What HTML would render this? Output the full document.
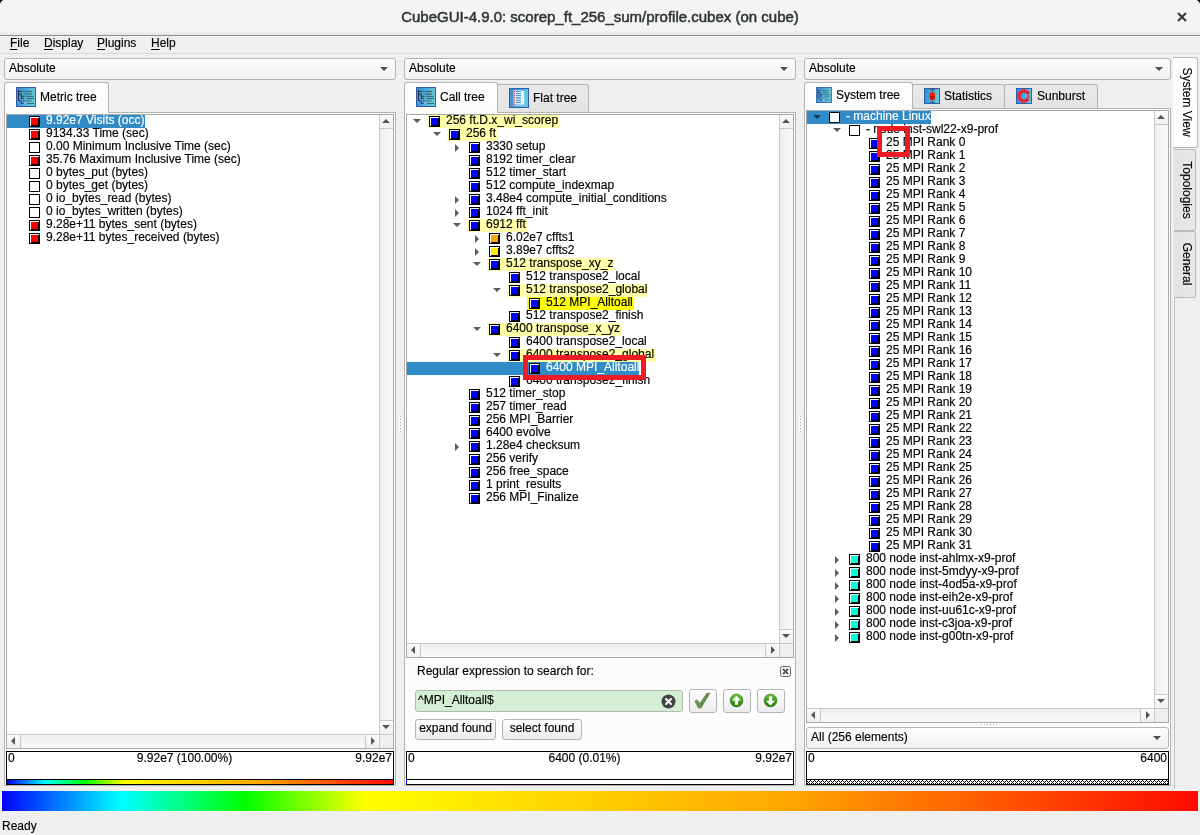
<!DOCTYPE html>
<html><head><meta charset="utf-8"><title>CubeGUI-4.9.0</title>
<style>
html,body{margin:0;padding:0}
body{width:1200px;height:835px;position:relative;overflow:hidden;background:#000;font:12px/13px "Liberation Sans",sans-serif;color:#000;-webkit-text-stroke:0.15px}
.a,.a *{position:absolute;box-sizing:border-box}
#win{will-change:transform;left:0;top:0;width:1200px;height:835px;background:#efefef;border-radius:5px 5px 0 0;overflow:hidden}
#tb{left:0;top:0;width:1200px;height:35px;background:linear-gradient(#f4f4f4 0,#f4f4f4 86%,#e7e7e6 100%)}
#tbl{left:0;top:35px;width:1200px;height:1px;background:#8e8e89}
#tbl2{left:0;top:36px;width:1200px;height:1px;background:#dcdcdc}
#title{left:0;top:8px;width:1200px;text-align:center;font:15px/18px "Liberation Sans",sans-serif;color:#2e3436;-webkit-text-stroke:0.5px #2e3436;white-space:nowrap}
.mi{top:36px;height:14px;line-height:14px;white-space:nowrap}
.mi u{position:static;text-decoration:underline;text-underline-offset:2px}
#msep{left:0;top:53px;width:1200px;height:1px;background:#dadada}
.combo{height:22px;border:1px solid #b4b4b4;border-radius:3px;background:linear-gradient(#fdfdfd,#f1f1f1);}
.combo span{left:4px;top:2px;line-height:14px;white-space:nowrap}
.combo i{right:7px;top:8px;width:0;height:0;border-left:4px solid transparent;border-right:4px solid transparent;border-top:4px solid #4f4f4f}
.tab{border:1px solid #b4b4b4;border-bottom:none;border-radius:3px 3px 0 0;background:linear-gradient(#fefefe,#fcfcfc)}
.tab.off{background:linear-gradient(#e9e9e9,#e3e3e3)}
.tab span{white-space:nowrap;line-height:14px}
.pane{border:1px solid #b4b4b4;background:#fcfcfc}
.tree{border:1px solid #a9a9a9;background:#fff;overflow:hidden}
.row{left:0;height:13px;white-space:nowrap}
.row .t{top:0;height:13px;line-height:11px;padding:0 1px 0 0;white-space:nowrap}
.ic{width:11px;height:11px;top:1px;background-color:#000;background-repeat:no-repeat}
.ad{width:0;height:0;top:4px;border-left:4px solid transparent;border-right:4px solid transparent;border-top:4px solid #5c5c5c}
.ar{width:0;height:0;top:3px;border-top:4px solid transparent;border-bottom:4px solid transparent;border-left:4px solid #5c5c5c}
.hl{background:#ffffaa}
.hl2{background:#ffff00}
.sel{background:#308cc6;color:#fff}
.row .t.sel{padding-right:0}
.sb{background:#f4f4f4}
.vb{border:1px solid #000;background:#fff}
.vb span{top:0px;line-height:13px;white-space:nowrap}
.btn{border:1px solid #b4b4b4;border-radius:3px;background:linear-gradient(#fdfdfd,#ececec)}
.btn span{white-space:nowrap;line-height:14px}
</style></head>
<body>
<div id="win" class="a">
<div id="tb"></div><div id="tbl"></div>
<div id="title">CubeGUI-4.9.0: scorep_ft_256_sum/profile.cubex (on cube)</div>
<svg style="left:1176px;top:11px" width="12" height="12" viewBox="0 0 12 12"><path d="M2 2l8 8M10 2l-8 8" stroke="#2e3436" stroke-width="2" fill="none"/></svg>
<div class="mi" style="left:10px"><u>F</u>ile</div>
<div class="mi" style="left:44px"><u>D</u>isplay</div>
<div class="mi" style="left:97px"><u>P</u>lugins</div>
<div class="mi" style="left:151px"><u>H</u>elp</div>
<div id="msep"></div>
<div class="combo" style="left:4px;top:58px;width:392px"><span>Absolute</span><i></i></div>
<div class="pane" style="left:4px;top:112px;width:392px;height:674px"></div>
<div class="tab" style="left:4px;top:82px;width:105px;height:31px"><svg style="left:11px;top:4px" width="20" height="20" viewBox="0 0 20 20"><defs><linearGradient id="g1" x1="0" y1="0" x2="1" y2="0.25"><stop offset="0" stop-color="#3c86cc"/><stop offset="0.5" stop-color="#48a6d8"/><stop offset="1" stop-color="#62cbd9"/></linearGradient></defs><rect x="0.5" y="0.5" width="19" height="19" fill="url(#g1)" stroke="#2f5bb2"/><path d="M2.5 2.8v10.8h1.8l1.1 1.3v1.5h2.3M2.5 4.5h3.2M2.5 7h2.9v4.5h2.3M5.4 9.4h2.3" fill="none" stroke="#2e3338" stroke-width="1" opacity="1"/><path d="M8.9 4.5h7.1M11 9.4h7M11 11.5h7M11 16.4h7" fill="none" stroke="#46525e" stroke-width="0.9" opacity="1"/><path d="M8.9 13.6h7" stroke="#557080" stroke-width="0.9" opacity="1"/><path d="M8.9 7h7" stroke="#527488" stroke-width="1.7" opacity="1"/><rect x="6.8" y="3.9" width="1.3" height="1.2" fill="#3b55e0"/><rect x="6.8" y="6.1" width="1.3" height="1.8" fill="#30e050"/><rect x="8.8" y="8.8" width="1.3" height="1.2" fill="#4060e0"/><rect x="8.7" y="10.7" width="1.5" height="1.5" fill="#20f030"/><rect x="6.9" y="12.9" width="1.1" height="1.5" fill="#d03050"/><rect x="8.8" y="15.4" width="1.3" height="1.7" fill="#e8d040"/></svg><span style="left:35px;top:7px">Metric tree</span></div>
<div class="tree" style="left:6px;top:114px;width:388px;height:635px"><div style="left:0;top:0;width:386px;height:633px">
<div class="row" style="top:0px;width:100%"><div class="sel" style="left:0px;top:0;width:39px;height:13px"></div><div class="ic" style="left:22px;background-image:linear-gradient(#ff0000,#ff0000),linear-gradient(#000,#000),linear-gradient(#fff,#fff);background-position:2px 2px,2px 2px,1px 1px;background-size:7px 7px,8px 8px,9px 9px"></div><span class="t sel" style="left:39px">9.92e7 Visits (occ)</span></div>
<div class="row" style="top:13px;width:100%"><div class="ic" style="left:22px;background-image:linear-gradient(#ff0000,#ff0000),linear-gradient(#000,#000),linear-gradient(#fff,#fff);background-position:2px 2px,2px 2px,1px 1px;background-size:7px 7px,8px 8px,9px 9px"></div><span class="t " style="left:39px">9134.33 Time (sec)</span></div>
<div class="row" style="top:26px;width:100%"><div class="ic" style="left:22px;background-image:linear-gradient(#fff,#fff);background-position:1px 1px;background-size:9px 9px"></div><span class="t " style="left:39px">0.00 Minimum Inclusive Time (sec)</span></div>
<div class="row" style="top:39px;width:100%"><div class="ic" style="left:22px;background-image:linear-gradient(#ff0000,#ff0000),linear-gradient(#000,#000),linear-gradient(#fff,#fff);background-position:2px 2px,2px 2px,1px 1px;background-size:7px 7px,8px 8px,9px 9px"></div><span class="t " style="left:39px">35.76 Maximum Inclusive Time (sec)</span></div>
<div class="row" style="top:52px;width:100%"><div class="ic" style="left:22px;background-image:linear-gradient(#fff,#fff);background-position:1px 1px;background-size:9px 9px"></div><span class="t " style="left:39px">0 bytes_put (bytes)</span></div>
<div class="row" style="top:65px;width:100%"><div class="ic" style="left:22px;background-image:linear-gradient(#fff,#fff);background-position:1px 1px;background-size:9px 9px"></div><span class="t " style="left:39px">0 bytes_get (bytes)</span></div>
<div class="row" style="top:78px;width:100%"><div class="ic" style="left:22px;background-image:linear-gradient(#fff,#fff);background-position:1px 1px;background-size:9px 9px"></div><span class="t " style="left:39px">0 io_bytes_read (bytes)</span></div>
<div class="row" style="top:91px;width:100%"><div class="ic" style="left:22px;background-image:linear-gradient(#fff,#fff);background-position:1px 1px;background-size:9px 9px"></div><span class="t " style="left:39px">0 io_bytes_written (bytes)</span></div>
<div class="row" style="top:104px;width:100%"><div class="ic" style="left:22px;background-image:linear-gradient(#ff0000,#ff0000),linear-gradient(#000,#000),linear-gradient(#fff,#fff);background-position:2px 2px,2px 2px,1px 1px;background-size:7px 7px,8px 8px,9px 9px"></div><span class="t " style="left:39px">9.28e+11 bytes_sent (bytes)</span></div>
<div class="row" style="top:117px;width:100%"><div class="ic" style="left:22px;background-image:linear-gradient(#ff0000,#ff0000),linear-gradient(#000,#000),linear-gradient(#fff,#fff);background-position:2px 2px,2px 2px,1px 1px;background-size:7px 7px,8px 8px,9px 9px"></div><span class="t " style="left:39px">9.28e+11 bytes_received (bytes)</span></div>
<div class="sb" style="left:372px;top:0px;width:14px;height:619px;border-left:1px solid #c8c8c8;background:linear-gradient(90deg,#eeeeee,#f9f9f9)"><div style="left:0;top:0;width:13px;height:14px;border-bottom:1px solid #c8c8c8;background:linear-gradient(#fcfcfc,#f0f0f0)"><div style="left:2px;top:4px;width:0;height:0;border-left:4px solid transparent;border-right:4px solid transparent;border-bottom:4px solid #555"></div></div><div style="left:0;bottom:0;width:13px;height:14px;border-top:1px solid #c8c8c8;background:linear-gradient(#fcfcfc,#f0f0f0)"><div style="left:2px;top:4px;width:0;height:0;border-left:4px solid transparent;border-right:4px solid transparent;border-top:4px solid #555"></div></div></div>
<div style="left:372px;top:619px;width:14px;height:14px;border-top:1px solid #c8c8c8;border-left:1px solid #c8c8c8;background:#efefef"></div><div class="sb" style="left:0px;top:619px;width:372px;height:14px;border-top:1px solid #c8c8c8;background:linear-gradient(#eeeeee,#f9f9f9)"><div style="left:0;top:0;width:14px;height:13px;border-right:1px solid #c8c8c8;background:linear-gradient(#fcfcfc,#f0f0f0)"><div style="left:4px;top:2px;width:0;height:0;border-top:4px solid transparent;border-bottom:4px solid transparent;border-right:4px solid #555"></div></div><div style="right:0;top:0;width:14px;height:13px;border-left:1px solid #c8c8c8;background:linear-gradient(#fcfcfc,#f0f0f0)"><div style="left:5px;top:2px;width:0;height:0;border-top:4px solid transparent;border-bottom:4px solid transparent;border-left:4px solid #555"></div></div></div>
</div></div>
<div class="vb" style="left:6px;top:751px;width:388px;height:34px"><span style="left:1px">0</span><span style="left:0;width:355px;text-align:center">9.92e7 (100.00%)</span><span style="right:1px">9.92e7</span><div style="left:0;top:27px;width:386px;height:1px;background:#000"></div><div style="left:0;top:28px;width:386px;height:4px;background:linear-gradient(90deg,#0000ff 0%,#00ffff 10%,#00ff00 20.3%,#ffff00 30.4%,#ffa500 66%,#ff0a00 100%)"></div></div>
<div class="combo" style="left:404px;top:58px;width:392px"><span>Absolute</span><i></i></div>
<div class="pane" style="left:404px;top:112px;width:392px;height:674px"></div>
<div class="tab off" style="left:497px;top:84px;width:92px;height:28px"><svg style="left:11px;top:3px" width="20" height="20" viewBox="0 0 20 20"><defs><linearGradient id="gf" x1="0" y1="0" x2="1" y2="0.25"><stop offset="0" stop-color="#3c86cc"/><stop offset="0.5" stop-color="#48a6d8"/><stop offset="1" stop-color="#62cbd9"/></linearGradient><linearGradient id="gp" x1="0" y1="0" x2="1" y2="0"><stop offset="0" stop-color="#c4e0f6"/><stop offset="1" stop-color="#eef7fc"/></linearGradient></defs><rect x="0.5" y="0.5" width="19" height="19" fill="url(#gf)" stroke="#2f5bb2"/><path d="M4.6 2.2h7.6l0.6 0.8h2.4v13.4h-2.2l-0.6 1h-7.8z" fill="url(#gp)"/><path d="M7 3.4h5M7 5.5h5M7 7.5h5M7 12.4h5M7 14.4h5" stroke="#3d8fd8" stroke-width="0.9"/><path d="M7 9.9h5" stroke="#6aaee6" stroke-width="1.9"/><path d="M7 16.4h5" stroke="#8cc2ec" stroke-width="0.9"/><g fill="#ee4048"><rect x="4.9" y="2.9" width="1.1" height="1.1"/><rect x="4.9" y="5" width="1.1" height="1.1"/><rect x="4.9" y="7" width="1.1" height="1.1"/><rect x="4.9" y="9" width="1.1" height="1.8" opacity="0.7"/><rect x="4.9" y="11.9" width="1.1" height="1.1"/><rect x="4.9" y="13.9" width="1.1" height="1.1"/><rect x="4.9" y="15.9" width="1.1" height="1.1"/></g></svg><span style="left:35px;top:6px">Flat tree</span></div>
<div class="tab" style="left:404px;top:82px;width:94px;height:31px"><svg style="left:11px;top:4px" width="20" height="20" viewBox="0 0 20 20"><defs><linearGradient id="g2" x1="0" y1="0" x2="1" y2="0.25"><stop offset="0" stop-color="#3c86cc"/><stop offset="0.5" stop-color="#48a6d8"/><stop offset="1" stop-color="#62cbd9"/></linearGradient></defs><rect x="0.5" y="0.5" width="19" height="19" fill="url(#g2)" stroke="#2f5bb2"/><path d="M2.5 2.8v10.8h1.8l1.1 1.3v1.5h2.3M2.5 4.5h3.2M2.5 7h2.9v4.5h2.3M5.4 9.4h2.3" fill="none" stroke="#2e3338" stroke-width="1" opacity="1"/><path d="M8.9 4.5h7.1M11 9.4h7M11 11.5h7M11 16.4h7" fill="none" stroke="#46525e" stroke-width="0.9" opacity="1"/><path d="M8.9 13.6h7" stroke="#557080" stroke-width="0.9" opacity="1"/><path d="M8.9 7h7" stroke="#527488" stroke-width="1.7" opacity="1"/><rect x="6.8" y="3.9" width="1.3" height="1.2" fill="#3b55e0"/><rect x="6.8" y="6.1" width="1.3" height="1.8" fill="#30e050"/><rect x="8.8" y="8.8" width="1.3" height="1.2" fill="#4060e0"/><rect x="8.7" y="10.7" width="1.5" height="1.5" fill="#20f030"/><rect x="6.9" y="12.9" width="1.1" height="1.5" fill="#d03050"/><rect x="8.8" y="15.4" width="1.3" height="1.7" fill="#e8d040"/></svg><span style="left:35px;top:7px">Call tree</span></div>
<div class="tree" style="left:406px;top:114px;width:388px;height:544px"><div style="left:0;top:0;width:386px;height:542px">
<div class="row" style="top:0px;width:100%"><div class="hl" style="left:20px;top:0;width:19px;height:13px"></div><div class="ad" style="left:6px"></div><div class="ic" style="left:22px;background-image:linear-gradient(#0000ff,#0000ff),linear-gradient(#000,#000),linear-gradient(#fff,#fff);background-position:2px 2px,2px 2px,1px 1px;background-size:7px 7px,8px 8px,9px 9px"></div><span class="t hl" style="left:39px">256 ft.D.x_wi_scorep</span></div>
<div class="row" style="top:13px;width:100%"><div class="hl" style="left:40px;top:0;width:19px;height:13px"></div><div class="ad" style="left:26px"></div><div class="ic" style="left:42px;background-image:linear-gradient(#0000ff,#0000ff),linear-gradient(#000,#000),linear-gradient(#fff,#fff);background-position:2px 2px,2px 2px,1px 1px;background-size:7px 7px,8px 8px,9px 9px"></div><span class="t hl" style="left:59px">256 ft</span></div>
<div class="row" style="top:26px;width:100%"><div class="ar" style="left:48px"></div><div class="ic" style="left:62px;background-image:linear-gradient(#0000ff,#0000ff),linear-gradient(#000,#000),linear-gradient(#fff,#fff);background-position:2px 2px,2px 2px,1px 1px;background-size:7px 7px,8px 8px,9px 9px"></div><span class="t " style="left:79px">3330 setup</span></div>
<div class="row" style="top:39px;width:100%"><div class="ic" style="left:62px;background-image:linear-gradient(#0000ff,#0000ff),linear-gradient(#000,#000),linear-gradient(#fff,#fff);background-position:2px 2px,2px 2px,1px 1px;background-size:7px 7px,8px 8px,9px 9px"></div><span class="t " style="left:79px">8192 timer_clear</span></div>
<div class="row" style="top:52px;width:100%"><div class="ic" style="left:62px;background-image:linear-gradient(#0000ff,#0000ff),linear-gradient(#000,#000),linear-gradient(#fff,#fff);background-position:2px 2px,2px 2px,1px 1px;background-size:7px 7px,8px 8px,9px 9px"></div><span class="t " style="left:79px">512 timer_start</span></div>
<div class="row" style="top:65px;width:100%"><div class="ic" style="left:62px;background-image:linear-gradient(#0000ff,#0000ff),linear-gradient(#000,#000),linear-gradient(#fff,#fff);background-position:2px 2px,2px 2px,1px 1px;background-size:7px 7px,8px 8px,9px 9px"></div><span class="t " style="left:79px">512 compute_indexmap</span></div>
<div class="row" style="top:78px;width:100%"><div class="ar" style="left:48px"></div><div class="ic" style="left:62px;background-image:linear-gradient(#0000ff,#0000ff),linear-gradient(#000,#000),linear-gradient(#fff,#fff);background-position:2px 2px,2px 2px,1px 1px;background-size:7px 7px,8px 8px,9px 9px"></div><span class="t " style="left:79px">3.48e4 compute_initial_conditions</span></div>
<div class="row" style="top:91px;width:100%"><div class="ar" style="left:48px"></div><div class="ic" style="left:62px;background-image:linear-gradient(#0000ff,#0000ff),linear-gradient(#000,#000),linear-gradient(#fff,#fff);background-position:2px 2px,2px 2px,1px 1px;background-size:7px 7px,8px 8px,9px 9px"></div><span class="t " style="left:79px">1024 fft_init</span></div>
<div class="row" style="top:104px;width:100%"><div class="hl" style="left:60px;top:0;width:19px;height:13px"></div><div class="ad" style="left:46px"></div><div class="ic" style="left:62px;background-image:linear-gradient(#0000ff,#0000ff),linear-gradient(#000,#000),linear-gradient(#fff,#fff);background-position:2px 2px,2px 2px,1px 1px;background-size:7px 7px,8px 8px,9px 9px"></div><span class="t hl" style="left:79px">6912 fft</span></div>
<div class="row" style="top:117px;width:100%"><div class="ar" style="left:68px"></div><div class="ic" style="left:82px;background-image:linear-gradient(#ffa500,#ffa500),linear-gradient(#000,#000),linear-gradient(#fff,#fff);background-position:2px 2px,2px 2px,1px 1px;background-size:7px 7px,8px 8px,9px 9px"></div><span class="t " style="left:99px">6.02e7 cffts1</span></div>
<div class="row" style="top:130px;width:100%"><div class="ar" style="left:68px"></div><div class="ic" style="left:82px;background-image:linear-gradient(#ffee00,#ffee00),linear-gradient(#000,#000),linear-gradient(#fff,#fff);background-position:2px 2px,2px 2px,1px 1px;background-size:7px 7px,8px 8px,9px 9px"></div><span class="t " style="left:99px">3.89e7 cffts2</span></div>
<div class="row" style="top:143px;width:100%"><div class="hl" style="left:80px;top:0;width:19px;height:13px"></div><div class="ad" style="left:66px"></div><div class="ic" style="left:82px;background-image:linear-gradient(#0000ff,#0000ff),linear-gradient(#000,#000),linear-gradient(#fff,#fff);background-position:2px 2px,2px 2px,1px 1px;background-size:7px 7px,8px 8px,9px 9px"></div><span class="t hl" style="left:99px">512 transpose_xy_z</span></div>
<div class="row" style="top:156px;width:100%"><div class="ic" style="left:102px;background-image:linear-gradient(#0000ff,#0000ff),linear-gradient(#000,#000),linear-gradient(#fff,#fff);background-position:2px 2px,2px 2px,1px 1px;background-size:7px 7px,8px 8px,9px 9px"></div><span class="t " style="left:119px">512 transpose2_local</span></div>
<div class="row" style="top:169px;width:100%"><div class="hl" style="left:100px;top:0;width:19px;height:13px"></div><div class="ad" style="left:86px"></div><div class="ic" style="left:102px;background-image:linear-gradient(#0000ff,#0000ff),linear-gradient(#000,#000),linear-gradient(#fff,#fff);background-position:2px 2px,2px 2px,1px 1px;background-size:7px 7px,8px 8px,9px 9px"></div><span class="t hl" style="left:119px">512 transpose2_global</span></div>
<div class="row" style="top:182px;width:100%"><div class="hl2" style="left:120px;top:0;width:19px;height:13px"></div><div class="ic" style="left:122px;background-image:linear-gradient(#0000ff,#0000ff),linear-gradient(#000,#000),linear-gradient(#fff,#fff);background-position:2px 2px,2px 2px,1px 1px;background-size:7px 7px,8px 8px,9px 9px"></div><span class="t hl2" style="left:139px">512 MPI_Alltoall</span></div>
<div class="row" style="top:195px;width:100%"><div class="ic" style="left:102px;background-image:linear-gradient(#0000ff,#0000ff),linear-gradient(#000,#000),linear-gradient(#fff,#fff);background-position:2px 2px,2px 2px,1px 1px;background-size:7px 7px,8px 8px,9px 9px"></div><span class="t " style="left:119px">512 transpose2_finish</span></div>
<div class="row" style="top:208px;width:100%"><div class="hl" style="left:80px;top:0;width:19px;height:13px"></div><div class="ad" style="left:66px"></div><div class="ic" style="left:82px;background-image:linear-gradient(#0000ff,#0000ff),linear-gradient(#000,#000),linear-gradient(#fff,#fff);background-position:2px 2px,2px 2px,1px 1px;background-size:7px 7px,8px 8px,9px 9px"></div><span class="t hl" style="left:99px">6400 transpose_x_yz</span></div>
<div class="row" style="top:221px;width:100%"><div class="ic" style="left:102px;background-image:linear-gradient(#0000ff,#0000ff),linear-gradient(#000,#000),linear-gradient(#fff,#fff);background-position:2px 2px,2px 2px,1px 1px;background-size:7px 7px,8px 8px,9px 9px"></div><span class="t " style="left:119px">6400 transpose2_local</span></div>
<div class="row" style="top:234px;width:100%"><div class="hl" style="left:100px;top:0;width:19px;height:13px"></div><div class="ad" style="left:86px"></div><div class="ic" style="left:102px;background-image:linear-gradient(#0000ff,#0000ff),linear-gradient(#000,#000),linear-gradient(#fff,#fff);background-position:2px 2px,2px 2px,1px 1px;background-size:7px 7px,8px 8px,9px 9px"></div><span class="t hl" style="left:119px">6400 transpose2_global</span></div>
<div class="row" style="top:247px;width:100%"><div class="sel" style="left:0px;top:0;width:139px;height:13px"></div><div class="ic" style="left:122px;background-image:linear-gradient(#0000ff,#0000ff),linear-gradient(#000,#000),linear-gradient(#fff,#fff);background-position:2px 2px,2px 2px,1px 1px;background-size:7px 7px,8px 8px,9px 9px"></div><span class="t sel" style="left:139px">6400 MPI_Alltoall</span></div>
<div class="row" style="top:260px;width:100%"><div class="ic" style="left:102px;background-image:linear-gradient(#0000ff,#0000ff),linear-gradient(#000,#000),linear-gradient(#fff,#fff);background-position:2px 2px,2px 2px,1px 1px;background-size:7px 7px,8px 8px,9px 9px"></div><span class="t " style="left:119px">6400 transpose2_finish</span></div>
<div class="row" style="top:273px;width:100%"><div class="ic" style="left:62px;background-image:linear-gradient(#0000ff,#0000ff),linear-gradient(#000,#000),linear-gradient(#fff,#fff);background-position:2px 2px,2px 2px,1px 1px;background-size:7px 7px,8px 8px,9px 9px"></div><span class="t " style="left:79px">512 timer_stop</span></div>
<div class="row" style="top:286px;width:100%"><div class="ic" style="left:62px;background-image:linear-gradient(#0000ff,#0000ff),linear-gradient(#000,#000),linear-gradient(#fff,#fff);background-position:2px 2px,2px 2px,1px 1px;background-size:7px 7px,8px 8px,9px 9px"></div><span class="t " style="left:79px">257 timer_read</span></div>
<div class="row" style="top:299px;width:100%"><div class="ic" style="left:62px;background-image:linear-gradient(#0000ff,#0000ff),linear-gradient(#000,#000),linear-gradient(#fff,#fff);background-position:2px 2px,2px 2px,1px 1px;background-size:7px 7px,8px 8px,9px 9px"></div><span class="t " style="left:79px">256 MPI_Barrier</span></div>
<div class="row" style="top:312px;width:100%"><div class="ic" style="left:62px;background-image:linear-gradient(#0000ff,#0000ff),linear-gradient(#000,#000),linear-gradient(#fff,#fff);background-position:2px 2px,2px 2px,1px 1px;background-size:7px 7px,8px 8px,9px 9px"></div><span class="t " style="left:79px">6400 evolve</span></div>
<div class="row" style="top:325px;width:100%"><div class="ar" style="left:48px"></div><div class="ic" style="left:62px;background-image:linear-gradient(#0000ff,#0000ff),linear-gradient(#000,#000),linear-gradient(#fff,#fff);background-position:2px 2px,2px 2px,1px 1px;background-size:7px 7px,8px 8px,9px 9px"></div><span class="t " style="left:79px">1.28e4 checksum</span></div>
<div class="row" style="top:338px;width:100%"><div class="ic" style="left:62px;background-image:linear-gradient(#0000ff,#0000ff),linear-gradient(#000,#000),linear-gradient(#fff,#fff);background-position:2px 2px,2px 2px,1px 1px;background-size:7px 7px,8px 8px,9px 9px"></div><span class="t " style="left:79px">256 verify</span></div>
<div class="row" style="top:351px;width:100%"><div class="ic" style="left:62px;background-image:linear-gradient(#0000ff,#0000ff),linear-gradient(#000,#000),linear-gradient(#fff,#fff);background-position:2px 2px,2px 2px,1px 1px;background-size:7px 7px,8px 8px,9px 9px"></div><span class="t " style="left:79px">256 free_space</span></div>
<div class="row" style="top:364px;width:100%"><div class="ic" style="left:62px;background-image:linear-gradient(#0000ff,#0000ff),linear-gradient(#000,#000),linear-gradient(#fff,#fff);background-position:2px 2px,2px 2px,1px 1px;background-size:7px 7px,8px 8px,9px 9px"></div><span class="t " style="left:79px">1 print_results</span></div>
<div class="row" style="top:377px;width:100%"><div class="ic" style="left:62px;background-image:linear-gradient(#0000ff,#0000ff),linear-gradient(#000,#000),linear-gradient(#fff,#fff);background-position:2px 2px,2px 2px,1px 1px;background-size:7px 7px,8px 8px,9px 9px"></div><span class="t " style="left:79px">256 MPI_Finalize</span></div>
<div class="sb" style="left:372px;top:0px;width:14px;height:528px;border-left:1px solid #c8c8c8;background:linear-gradient(90deg,#eeeeee,#f9f9f9)"><div style="left:0;top:0;width:13px;height:14px;border-bottom:1px solid #c8c8c8;background:linear-gradient(#fcfcfc,#f0f0f0)"><div style="left:2px;top:4px;width:0;height:0;border-left:4px solid transparent;border-right:4px solid transparent;border-bottom:4px solid #555"></div></div><div style="left:0;bottom:0;width:13px;height:14px;border-top:1px solid #c8c8c8;background:linear-gradient(#fcfcfc,#f0f0f0)"><div style="left:2px;top:4px;width:0;height:0;border-left:4px solid transparent;border-right:4px solid transparent;border-top:4px solid #555"></div></div></div>
<div style="left:372px;top:528px;width:14px;height:14px;border-top:1px solid #c8c8c8;border-left:1px solid #c8c8c8;background:#efefef"></div><div class="sb" style="left:0px;top:528px;width:372px;height:14px;border-top:1px solid #c8c8c8;background:linear-gradient(#eeeeee,#f9f9f9)"><div style="left:0;top:0;width:14px;height:13px;border-right:1px solid #c8c8c8;background:linear-gradient(#fcfcfc,#f0f0f0)"><div style="left:4px;top:2px;width:0;height:0;border-top:4px solid transparent;border-bottom:4px solid transparent;border-right:4px solid #555"></div></div><div style="right:0;top:0;width:14px;height:13px;border-left:1px solid #c8c8c8;background:linear-gradient(#fcfcfc,#f0f0f0)"><div style="left:5px;top:2px;width:0;height:0;border-top:4px solid transparent;border-bottom:4px solid transparent;border-left:4px solid #555"></div></div></div>
</div></div>
<div style="left:417px;top:664px;line-height:14px;white-space:nowrap">Regular expression to search for:</div>
<svg style="left:780px;top:666px" width="11" height="11" viewBox="0 0 11 11"><rect x="0.5" y="0.5" width="10" height="10" rx="1.8" fill="#fdfdfd" stroke="#66635f"/><path d="M2.9 2.9l5.2 5.2M8.1 2.9l-5.2 5.2" stroke="#5a5754" stroke-width="2"/></svg>
<div style="left:415px;top:690px;width:268px;height:22px;border:1px solid #b0b8b0;border-radius:3px;background:#d5efd5"><span style="left:2px;top:2px;line-height:14px;white-space:nowrap">^MPI_Alltoall$</span><svg style="left:245px;top:3px" width="15" height="15" viewBox="0 0 15 15"><circle cx="7.5" cy="7.5" r="7" fill="#444"/><path d="M5 5l5 5M10 5l-5 5" stroke="#fff" stroke-width="2" stroke-linecap="round"/></svg></div>
<div class="btn" style="left:689px;top:689px;width:28px;height:24px"><svg style="left:-1px;top:-1px" width="28" height="24" viewBox="0 0 28 24"><defs><linearGradient id="gc" x1="0" y1="0" x2="1" y2="1"><stop offset="0" stop-color="#86aa6c"/><stop offset="1" stop-color="#56783e"/></linearGradient></defs><path d="M5.9 11.9L8.2 10.9 10.9 14.6 17.8 4.4 20.9 4.2 12.1 18.8 9.4 19z" fill="url(#gc)" stroke="#4c6c38" stroke-width="0.6" stroke-linejoin="round"/></svg></div>
<div class="btn" style="left:723px;top:689px;width:28px;height:24px"><svg style="left:-1px;top:-1px" width="28" height="24" viewBox="0 0 28 24"><defs><linearGradient id="gg1" x1="0" y1="0" x2="0" y2="1"><stop offset="0" stop-color="#72c244"/><stop offset="0.5" stop-color="#3f9a1c"/><stop offset="1" stop-color="#2c7a12"/></linearGradient></defs><circle cx="13.5" cy="11.5" r="6.4" fill="url(#gg1)" stroke="#2e7612" stroke-width="0.6"/><path d="M13.5 6.8l4.6 4.6h-3v4.4h-3.2v-4.4h-3z" fill="#fff"/></svg></div>
<div class="btn" style="left:757px;top:689px;width:28px;height:24px"><svg style="left:-1px;top:-1px" width="28" height="24" viewBox="0 0 28 24"><defs><linearGradient id="gg2" x1="0" y1="0" x2="0" y2="1"><stop offset="0" stop-color="#72c244"/><stop offset="0.5" stop-color="#3f9a1c"/><stop offset="1" stop-color="#2c7a12"/></linearGradient></defs><circle cx="13.5" cy="11.5" r="6.4" fill="url(#gg2)" stroke="#2e7612" stroke-width="0.6"/><path d="M13.5 16.4l4.6-4.6h-3v-4.4h-3.2v4.4h-3z" fill="#fff"/></svg></div>
<div class="btn" style="left:415px;top:719px;width:81px;height:21px"><span style="left:0;top:1px;width:79px;text-align:center">expand found</span></div>
<div class="btn" style="left:502px;top:719px;width:80px;height:21px"><span style="left:0;top:1px;width:78px;text-align:center">select found</span></div>
<div class="vb" style="left:406px;top:751px;width:388px;height:34px"><span style="left:1px">0</span><span style="left:0;width:355px;text-align:center">6400 (0.01%)</span><span style="right:1px">9.92e7</span><div style="left:0;top:27px;width:386px;height:1px;background:#000"></div><div style="left:-1px;top:28px;width:1px;height:4px;background:#0000ff"></div></div>
<div class="combo" style="left:804px;top:58px;width:367px"><span>Absolute</span><i></i></div>
<div class="pane" style="left:804px;top:108px;width:367px;height:678px"></div>
<div class="tab off" style="left:912px;top:84px;width:93px;height:24px"><svg style="left:11px;top:3px" width="16" height="16" viewBox="0 0 16 16"><defs><linearGradient id="gs" x1="0" y1="0" x2="1" y2="0.2"><stop offset="0" stop-color="#3c86cc"/><stop offset="0.5" stop-color="#48a6d8"/><stop offset="1" stop-color="#62cbd9"/></linearGradient><linearGradient id="gr" x1="0" y1="0" x2="0" y2="1"><stop offset="0" stop-color="#ff1c08"/><stop offset="0.45" stop-color="#ff1c08"/><stop offset="0.5" stop-color="#a81406"/><stop offset="1" stop-color="#e61406"/></linearGradient></defs><rect x="0.5" y="0.5" width="15" height="15" fill="url(#gs)" stroke="#2f5bb2"/><path d="M5.8 1.4h5.2M8.4 1.4v13M5.8 14.4h5.2" stroke="#3a4a58" stroke-width="0.8" fill="none"/><rect x="5.7" y="4.7" width="5.3" height="7" rx="0.5" fill="url(#gr)"/></svg><span style="left:31px;top:4px">Statistics</span></div>
<div class="tab off" style="left:1004px;top:84px;width:94px;height:24px"><svg style="left:11px;top:3px" width="16" height="16" viewBox="0 0 16 16"><defs><linearGradient id="gu" x1="0" y1="0" x2="1" y2="0.2"><stop offset="0" stop-color="#3c86cc"/><stop offset="0.5" stop-color="#48a6d8"/><stop offset="1" stop-color="#62cbd9"/></linearGradient></defs><rect x="0.5" y="0.5" width="15" height="15" fill="url(#gu)" stroke="#2f5bb2"/><path d="M12.3 10.6A5 5 0 1 1 12.6 5.9" fill="none" stroke="#e6202e" stroke-width="3.1"/><path d="M13.1 11.6A6.2 6.2 0 1 1 13.6 5.2" fill="none" stroke="#e03040" stroke-width="1.3" stroke-dasharray="1.3 0.9"/><path d="M11.6 4.6L14.7 10.5 11.4 9.6z" fill="#d83850"/></svg><span style="left:32px;top:4px">Sunburst</span></div>
<div class="tab" style="left:804px;top:82px;width:109px;height:27px"><svg style="left:11px;top:4px" width="16" height="16" viewBox="0 0 20 20"><defs><linearGradient id="g3" x1="0" y1="0" x2="1" y2="0.25"><stop offset="0" stop-color="#3c86cc"/><stop offset="0.5" stop-color="#48a6d8"/><stop offset="1" stop-color="#62cbd9"/></linearGradient></defs><rect x="0.5" y="0.5" width="19" height="19" fill="url(#g3)" stroke="#2f5bb2"/><path d="M2.5 2.8v10.8h1.8l1.1 1.3v1.5h2.3M2.5 4.5h3.2M2.5 7h2.9v4.5h2.3M5.4 9.4h2.3" fill="none" stroke="#2e3338" stroke-width="1" opacity="0.75"/><path d="M8.9 4.5h7.1M11 9.4h7M11 11.5h7M11 16.4h7" fill="none" stroke="#46525e" stroke-width="0.9" opacity="0.75"/><path d="M8.9 13.6h7" stroke="#557080" stroke-width="0.9" opacity="0.75"/><path d="M8.9 7h7" stroke="#527488" stroke-width="1.7" opacity="0.75"/><rect x="6.8" y="3.9" width="1.3" height="1.2" fill="#3b55e0"/><rect x="6.8" y="6.1" width="1.3" height="1.8" fill="#30e050"/><rect x="8.8" y="8.8" width="1.3" height="1.2" fill="#4060e0"/><rect x="8.7" y="10.7" width="1.5" height="1.5" fill="#20f030"/><rect x="6.9" y="12.9" width="1.1" height="1.5" fill="#d03050"/><rect x="8.8" y="15.4" width="1.3" height="1.7" fill="#e8d040"/></svg><span style="left:31px;top:5px">System tree</span></div>
<div class="tree" style="left:806px;top:110px;width:363px;height:613px"><div style="left:0;top:0;width:361px;height:611px">
<div class="row" style="top:0px;width:100%"><div class="sel" style="left:0px;top:0;width:39px;height:13px"></div><div class="ad" style="left:6px;border-top-color:#17384f"></div><div class="ic" style="left:22px;background-image:linear-gradient(#fff,#fff);background-position:1px 1px;background-size:9px 9px"></div><span class="t sel" style="left:39px">- machine Linux</span></div>
<div class="row" style="top:13px;width:100%"><div class="ad" style="left:26px"></div><div class="ic" style="left:42px;background-image:linear-gradient(#fff,#fff);background-position:1px 1px;background-size:9px 9px"></div><span class="t " style="left:59px">- node inst-swl22-x9-prof</span></div>
<div class="row" style="top:26px;width:100%"><div class="ic" style="left:62px;background-image:linear-gradient(#0000ff,#0000ff),linear-gradient(#000,#000),linear-gradient(#fff,#fff);background-position:2px 2px,2px 2px,1px 1px;background-size:7px 7px,8px 8px,9px 9px"></div><span class="t " style="left:79px">25 MPI Rank 0</span></div>
<div class="row" style="top:39px;width:100%"><div class="ic" style="left:62px;background-image:linear-gradient(#0000ff,#0000ff),linear-gradient(#000,#000),linear-gradient(#fff,#fff);background-position:2px 2px,2px 2px,1px 1px;background-size:7px 7px,8px 8px,9px 9px"></div><span class="t " style="left:79px">25 MPI Rank 1</span></div>
<div class="row" style="top:52px;width:100%"><div class="ic" style="left:62px;background-image:linear-gradient(#0000ff,#0000ff),linear-gradient(#000,#000),linear-gradient(#fff,#fff);background-position:2px 2px,2px 2px,1px 1px;background-size:7px 7px,8px 8px,9px 9px"></div><span class="t " style="left:79px">25 MPI Rank 2</span></div>
<div class="row" style="top:65px;width:100%"><div class="ic" style="left:62px;background-image:linear-gradient(#0000ff,#0000ff),linear-gradient(#000,#000),linear-gradient(#fff,#fff);background-position:2px 2px,2px 2px,1px 1px;background-size:7px 7px,8px 8px,9px 9px"></div><span class="t " style="left:79px">25 MPI Rank 3</span></div>
<div class="row" style="top:78px;width:100%"><div class="ic" style="left:62px;background-image:linear-gradient(#0000ff,#0000ff),linear-gradient(#000,#000),linear-gradient(#fff,#fff);background-position:2px 2px,2px 2px,1px 1px;background-size:7px 7px,8px 8px,9px 9px"></div><span class="t " style="left:79px">25 MPI Rank 4</span></div>
<div class="row" style="top:91px;width:100%"><div class="ic" style="left:62px;background-image:linear-gradient(#0000ff,#0000ff),linear-gradient(#000,#000),linear-gradient(#fff,#fff);background-position:2px 2px,2px 2px,1px 1px;background-size:7px 7px,8px 8px,9px 9px"></div><span class="t " style="left:79px">25 MPI Rank 5</span></div>
<div class="row" style="top:104px;width:100%"><div class="ic" style="left:62px;background-image:linear-gradient(#0000ff,#0000ff),linear-gradient(#000,#000),linear-gradient(#fff,#fff);background-position:2px 2px,2px 2px,1px 1px;background-size:7px 7px,8px 8px,9px 9px"></div><span class="t " style="left:79px">25 MPI Rank 6</span></div>
<div class="row" style="top:117px;width:100%"><div class="ic" style="left:62px;background-image:linear-gradient(#0000ff,#0000ff),linear-gradient(#000,#000),linear-gradient(#fff,#fff);background-position:2px 2px,2px 2px,1px 1px;background-size:7px 7px,8px 8px,9px 9px"></div><span class="t " style="left:79px">25 MPI Rank 7</span></div>
<div class="row" style="top:130px;width:100%"><div class="ic" style="left:62px;background-image:linear-gradient(#0000ff,#0000ff),linear-gradient(#000,#000),linear-gradient(#fff,#fff);background-position:2px 2px,2px 2px,1px 1px;background-size:7px 7px,8px 8px,9px 9px"></div><span class="t " style="left:79px">25 MPI Rank 8</span></div>
<div class="row" style="top:143px;width:100%"><div class="ic" style="left:62px;background-image:linear-gradient(#0000ff,#0000ff),linear-gradient(#000,#000),linear-gradient(#fff,#fff);background-position:2px 2px,2px 2px,1px 1px;background-size:7px 7px,8px 8px,9px 9px"></div><span class="t " style="left:79px">25 MPI Rank 9</span></div>
<div class="row" style="top:156px;width:100%"><div class="ic" style="left:62px;background-image:linear-gradient(#0000ff,#0000ff),linear-gradient(#000,#000),linear-gradient(#fff,#fff);background-position:2px 2px,2px 2px,1px 1px;background-size:7px 7px,8px 8px,9px 9px"></div><span class="t " style="left:79px">25 MPI Rank 10</span></div>
<div class="row" style="top:169px;width:100%"><div class="ic" style="left:62px;background-image:linear-gradient(#0000ff,#0000ff),linear-gradient(#000,#000),linear-gradient(#fff,#fff);background-position:2px 2px,2px 2px,1px 1px;background-size:7px 7px,8px 8px,9px 9px"></div><span class="t " style="left:79px">25 MPI Rank 11</span></div>
<div class="row" style="top:182px;width:100%"><div class="ic" style="left:62px;background-image:linear-gradient(#0000ff,#0000ff),linear-gradient(#000,#000),linear-gradient(#fff,#fff);background-position:2px 2px,2px 2px,1px 1px;background-size:7px 7px,8px 8px,9px 9px"></div><span class="t " style="left:79px">25 MPI Rank 12</span></div>
<div class="row" style="top:195px;width:100%"><div class="ic" style="left:62px;background-image:linear-gradient(#0000ff,#0000ff),linear-gradient(#000,#000),linear-gradient(#fff,#fff);background-position:2px 2px,2px 2px,1px 1px;background-size:7px 7px,8px 8px,9px 9px"></div><span class="t " style="left:79px">25 MPI Rank 13</span></div>
<div class="row" style="top:208px;width:100%"><div class="ic" style="left:62px;background-image:linear-gradient(#0000ff,#0000ff),linear-gradient(#000,#000),linear-gradient(#fff,#fff);background-position:2px 2px,2px 2px,1px 1px;background-size:7px 7px,8px 8px,9px 9px"></div><span class="t " style="left:79px">25 MPI Rank 14</span></div>
<div class="row" style="top:221px;width:100%"><div class="ic" style="left:62px;background-image:linear-gradient(#0000ff,#0000ff),linear-gradient(#000,#000),linear-gradient(#fff,#fff);background-position:2px 2px,2px 2px,1px 1px;background-size:7px 7px,8px 8px,9px 9px"></div><span class="t " style="left:79px">25 MPI Rank 15</span></div>
<div class="row" style="top:234px;width:100%"><div class="ic" style="left:62px;background-image:linear-gradient(#0000ff,#0000ff),linear-gradient(#000,#000),linear-gradient(#fff,#fff);background-position:2px 2px,2px 2px,1px 1px;background-size:7px 7px,8px 8px,9px 9px"></div><span class="t " style="left:79px">25 MPI Rank 16</span></div>
<div class="row" style="top:247px;width:100%"><div class="ic" style="left:62px;background-image:linear-gradient(#0000ff,#0000ff),linear-gradient(#000,#000),linear-gradient(#fff,#fff);background-position:2px 2px,2px 2px,1px 1px;background-size:7px 7px,8px 8px,9px 9px"></div><span class="t " style="left:79px">25 MPI Rank 17</span></div>
<div class="row" style="top:260px;width:100%"><div class="ic" style="left:62px;background-image:linear-gradient(#0000ff,#0000ff),linear-gradient(#000,#000),linear-gradient(#fff,#fff);background-position:2px 2px,2px 2px,1px 1px;background-size:7px 7px,8px 8px,9px 9px"></div><span class="t " style="left:79px">25 MPI Rank 18</span></div>
<div class="row" style="top:273px;width:100%"><div class="ic" style="left:62px;background-image:linear-gradient(#0000ff,#0000ff),linear-gradient(#000,#000),linear-gradient(#fff,#fff);background-position:2px 2px,2px 2px,1px 1px;background-size:7px 7px,8px 8px,9px 9px"></div><span class="t " style="left:79px">25 MPI Rank 19</span></div>
<div class="row" style="top:286px;width:100%"><div class="ic" style="left:62px;background-image:linear-gradient(#0000ff,#0000ff),linear-gradient(#000,#000),linear-gradient(#fff,#fff);background-position:2px 2px,2px 2px,1px 1px;background-size:7px 7px,8px 8px,9px 9px"></div><span class="t " style="left:79px">25 MPI Rank 20</span></div>
<div class="row" style="top:299px;width:100%"><div class="ic" style="left:62px;background-image:linear-gradient(#0000ff,#0000ff),linear-gradient(#000,#000),linear-gradient(#fff,#fff);background-position:2px 2px,2px 2px,1px 1px;background-size:7px 7px,8px 8px,9px 9px"></div><span class="t " style="left:79px">25 MPI Rank 21</span></div>
<div class="row" style="top:312px;width:100%"><div class="ic" style="left:62px;background-image:linear-gradient(#0000ff,#0000ff),linear-gradient(#000,#000),linear-gradient(#fff,#fff);background-position:2px 2px,2px 2px,1px 1px;background-size:7px 7px,8px 8px,9px 9px"></div><span class="t " style="left:79px">25 MPI Rank 22</span></div>
<div class="row" style="top:325px;width:100%"><div class="ic" style="left:62px;background-image:linear-gradient(#0000ff,#0000ff),linear-gradient(#000,#000),linear-gradient(#fff,#fff);background-position:2px 2px,2px 2px,1px 1px;background-size:7px 7px,8px 8px,9px 9px"></div><span class="t " style="left:79px">25 MPI Rank 23</span></div>
<div class="row" style="top:338px;width:100%"><div class="ic" style="left:62px;background-image:linear-gradient(#0000ff,#0000ff),linear-gradient(#000,#000),linear-gradient(#fff,#fff);background-position:2px 2px,2px 2px,1px 1px;background-size:7px 7px,8px 8px,9px 9px"></div><span class="t " style="left:79px">25 MPI Rank 24</span></div>
<div class="row" style="top:351px;width:100%"><div class="ic" style="left:62px;background-image:linear-gradient(#0000ff,#0000ff),linear-gradient(#000,#000),linear-gradient(#fff,#fff);background-position:2px 2px,2px 2px,1px 1px;background-size:7px 7px,8px 8px,9px 9px"></div><span class="t " style="left:79px">25 MPI Rank 25</span></div>
<div class="row" style="top:364px;width:100%"><div class="ic" style="left:62px;background-image:linear-gradient(#0000ff,#0000ff),linear-gradient(#000,#000),linear-gradient(#fff,#fff);background-position:2px 2px,2px 2px,1px 1px;background-size:7px 7px,8px 8px,9px 9px"></div><span class="t " style="left:79px">25 MPI Rank 26</span></div>
<div class="row" style="top:377px;width:100%"><div class="ic" style="left:62px;background-image:linear-gradient(#0000ff,#0000ff),linear-gradient(#000,#000),linear-gradient(#fff,#fff);background-position:2px 2px,2px 2px,1px 1px;background-size:7px 7px,8px 8px,9px 9px"></div><span class="t " style="left:79px">25 MPI Rank 27</span></div>
<div class="row" style="top:390px;width:100%"><div class="ic" style="left:62px;background-image:linear-gradient(#0000ff,#0000ff),linear-gradient(#000,#000),linear-gradient(#fff,#fff);background-position:2px 2px,2px 2px,1px 1px;background-size:7px 7px,8px 8px,9px 9px"></div><span class="t " style="left:79px">25 MPI Rank 28</span></div>
<div class="row" style="top:403px;width:100%"><div class="ic" style="left:62px;background-image:linear-gradient(#0000ff,#0000ff),linear-gradient(#000,#000),linear-gradient(#fff,#fff);background-position:2px 2px,2px 2px,1px 1px;background-size:7px 7px,8px 8px,9px 9px"></div><span class="t " style="left:79px">25 MPI Rank 29</span></div>
<div class="row" style="top:416px;width:100%"><div class="ic" style="left:62px;background-image:linear-gradient(#0000ff,#0000ff),linear-gradient(#000,#000),linear-gradient(#fff,#fff);background-position:2px 2px,2px 2px,1px 1px;background-size:7px 7px,8px 8px,9px 9px"></div><span class="t " style="left:79px">25 MPI Rank 30</span></div>
<div class="row" style="top:429px;width:100%"><div class="ic" style="left:62px;background-image:linear-gradient(#0000ff,#0000ff),linear-gradient(#000,#000),linear-gradient(#fff,#fff);background-position:2px 2px,2px 2px,1px 1px;background-size:7px 7px,8px 8px,9px 9px"></div><span class="t " style="left:79px">25 MPI Rank 31</span></div>
<div class="row" style="top:442px;width:100%"><div class="ar" style="left:28px"></div><div class="ic" style="left:42px;background-image:linear-gradient(#00ffdc,#00ffdc),linear-gradient(#000,#000),linear-gradient(#fff,#fff);background-position:2px 2px,2px 2px,1px 1px;background-size:7px 7px,8px 8px,9px 9px"></div><span class="t " style="left:59px">800 node inst-ahlmx-x9-prof</span></div>
<div class="row" style="top:455px;width:100%"><div class="ar" style="left:28px"></div><div class="ic" style="left:42px;background-image:linear-gradient(#00ffdc,#00ffdc),linear-gradient(#000,#000),linear-gradient(#fff,#fff);background-position:2px 2px,2px 2px,1px 1px;background-size:7px 7px,8px 8px,9px 9px"></div><span class="t " style="left:59px">800 node inst-5mdyy-x9-prof</span></div>
<div class="row" style="top:468px;width:100%"><div class="ar" style="left:28px"></div><div class="ic" style="left:42px;background-image:linear-gradient(#00ffdc,#00ffdc),linear-gradient(#000,#000),linear-gradient(#fff,#fff);background-position:2px 2px,2px 2px,1px 1px;background-size:7px 7px,8px 8px,9px 9px"></div><span class="t " style="left:59px">800 node inst-4od5a-x9-prof</span></div>
<div class="row" style="top:481px;width:100%"><div class="ar" style="left:28px"></div><div class="ic" style="left:42px;background-image:linear-gradient(#00ffdc,#00ffdc),linear-gradient(#000,#000),linear-gradient(#fff,#fff);background-position:2px 2px,2px 2px,1px 1px;background-size:7px 7px,8px 8px,9px 9px"></div><span class="t " style="left:59px">800 node inst-eih2e-x9-prof</span></div>
<div class="row" style="top:494px;width:100%"><div class="ar" style="left:28px"></div><div class="ic" style="left:42px;background-image:linear-gradient(#00ffdc,#00ffdc),linear-gradient(#000,#000),linear-gradient(#fff,#fff);background-position:2px 2px,2px 2px,1px 1px;background-size:7px 7px,8px 8px,9px 9px"></div><span class="t " style="left:59px">800 node inst-uu61c-x9-prof</span></div>
<div class="row" style="top:507px;width:100%"><div class="ar" style="left:28px"></div><div class="ic" style="left:42px;background-image:linear-gradient(#00ffdc,#00ffdc),linear-gradient(#000,#000),linear-gradient(#fff,#fff);background-position:2px 2px,2px 2px,1px 1px;background-size:7px 7px,8px 8px,9px 9px"></div><span class="t " style="left:59px">800 node inst-c3joa-x9-prof</span></div>
<div class="row" style="top:520px;width:100%"><div class="ar" style="left:28px"></div><div class="ic" style="left:42px;background-image:linear-gradient(#00ffdc,#00ffdc),linear-gradient(#000,#000),linear-gradient(#fff,#fff);background-position:2px 2px,2px 2px,1px 1px;background-size:7px 7px,8px 8px,9px 9px"></div><span class="t " style="left:59px">800 node inst-g00tn-x9-prof</span></div>
<div class="sb" style="left:347px;top:0px;width:14px;height:597px;border-left:1px solid #c8c8c8;background:linear-gradient(90deg,#eeeeee,#f9f9f9)"><div style="left:0;top:0;width:13px;height:14px;border-bottom:1px solid #c8c8c8;background:linear-gradient(#fcfcfc,#f0f0f0)"><div style="left:2px;top:4px;width:0;height:0;border-left:4px solid transparent;border-right:4px solid transparent;border-bottom:4px solid #555"></div></div><div style="left:0;bottom:0;width:13px;height:14px;border-top:1px solid #c8c8c8;background:linear-gradient(#fcfcfc,#f0f0f0)"><div style="left:2px;top:4px;width:0;height:0;border-left:4px solid transparent;border-right:4px solid transparent;border-top:4px solid #555"></div></div></div>
<div style="left:347px;top:597px;width:14px;height:14px;border-top:1px solid #c8c8c8;border-left:1px solid #c8c8c8;background:#efefef"></div><div class="sb" style="left:0px;top:597px;width:347px;height:14px;border-top:1px solid #c8c8c8;background:linear-gradient(#eeeeee,#f9f9f9)"><div style="left:0;top:0;width:14px;height:13px;border-right:1px solid #c8c8c8;background:linear-gradient(#fcfcfc,#f0f0f0)"><div style="left:4px;top:2px;width:0;height:0;border-top:4px solid transparent;border-bottom:4px solid transparent;border-right:4px solid #555"></div></div><div style="right:0;top:0;width:14px;height:13px;border-left:1px solid #c8c8c8;background:linear-gradient(#fcfcfc,#f0f0f0)"><div style="left:5px;top:2px;width:0;height:0;border-top:4px solid transparent;border-bottom:4px solid transparent;border-left:4px solid #555"></div></div></div>
</div></div>
<div class="combo" style="left:806px;top:727px;width:363px;height:22px"><span>All (256 elements)</span><i></i></div>
<div class="vb" style="left:806px;top:751px;width:363px;height:34px"><span style="left:1px">0</span><span style="right:1px">6400</span><div style="left:0;top:27px;width:361px;height:1px;background:#000"></div><svg style="left:0;top:28px" width="361" height="4" shape-rendering="crispEdges"><defs><pattern id="hp" width="4" height="4" patternUnits="userSpaceOnUse"><rect width="4" height="4" fill="#fff"/><path d="M3 0h1v1h-1zM0 1h1v1h-1zM2 1h1v1h-1zM1 2h1v1h-1zM0 3h1v1h-1zM2 3h1v1h-1z" fill="#000"/></pattern></defs><rect width="361" height="4" fill="url(#hp)"/></svg></div>
<div style="left:1174px;top:148px;width:1px;height:641px;background:#c4c4c4"></div>
<div style="left:1173px;top:57px;width:25px;height:91px;border:1px solid #b9b9b9;border-left:none;border-radius:0 3px 3px 0;background:linear-gradient(90deg,#fcfcfc,#fefefe)"><span style="left:14px;top:44px;transform:translate(-50%,-50%) rotate(90deg);white-space:nowrap;line-height:14px">System View</span></div>
<div style="left:1174px;top:149px;width:22px;height:82px;border:1px solid #b9b9b9;border-left:none;border-radius:0 3px 3px 0;background:linear-gradient(90deg,#e3e3e3,#e9e9e9)"><span style="left:13px;top:40px;transform:translate(-50%,-50%) rotate(90deg);white-space:nowrap;line-height:14px">Topologies</span></div>
<div style="left:1174px;top:231px;width:22px;height:67px;border:1px solid #b9b9b9;border-left:none;border-radius:0 3px 3px 0;background:linear-gradient(90deg,#e3e3e3,#e9e9e9)"><span style="left:13px;top:32px;transform:translate(-50%,-50%) rotate(90deg);white-space:nowrap;line-height:14px">General</span></div>
<div style="left:400px;top:416px;width:1px;height:1px;background:#a6a6a6;box-shadow:0 0 0 1px #f9f9f9"></div>
<div style="left:400px;top:419px;width:1px;height:1px;background:#a6a6a6;box-shadow:0 0 0 1px #f9f9f9"></div>
<div style="left:400px;top:422px;width:1px;height:1px;background:#a6a6a6;box-shadow:0 0 0 1px #f9f9f9"></div>
<div style="left:400px;top:425px;width:1px;height:1px;background:#a6a6a6;box-shadow:0 0 0 1px #f9f9f9"></div>
<div style="left:400px;top:428px;width:1px;height:1px;background:#a6a6a6;box-shadow:0 0 0 1px #f9f9f9"></div>
<div style="left:400px;top:431px;width:1px;height:1px;background:#a6a6a6;box-shadow:0 0 0 1px #f9f9f9"></div>
<div style="left:800px;top:416px;width:1px;height:1px;background:#a6a6a6;box-shadow:0 0 0 1px #f9f9f9"></div>
<div style="left:800px;top:419px;width:1px;height:1px;background:#a6a6a6;box-shadow:0 0 0 1px #f9f9f9"></div>
<div style="left:800px;top:422px;width:1px;height:1px;background:#a6a6a6;box-shadow:0 0 0 1px #f9f9f9"></div>
<div style="left:800px;top:425px;width:1px;height:1px;background:#a6a6a6;box-shadow:0 0 0 1px #f9f9f9"></div>
<div style="left:800px;top:428px;width:1px;height:1px;background:#a6a6a6;box-shadow:0 0 0 1px #f9f9f9"></div>
<div style="left:800px;top:431px;width:1px;height:1px;background:#a6a6a6;box-shadow:0 0 0 1px #f9f9f9"></div>
<div style="left:981px;top:724px;width:1px;height:1px;background:#a6a6a6;box-shadow:0 0 0 1px #fff"></div>
<div style="left:984px;top:724px;width:1px;height:1px;background:#a6a6a6;box-shadow:0 0 0 1px #fff"></div>
<div style="left:987px;top:724px;width:1px;height:1px;background:#a6a6a6;box-shadow:0 0 0 1px #fff"></div>
<div style="left:990px;top:724px;width:1px;height:1px;background:#a6a6a6;box-shadow:0 0 0 1px #fff"></div>
<div style="left:993px;top:724px;width:1px;height:1px;background:#a6a6a6;box-shadow:0 0 0 1px #fff"></div>
<div style="left:996px;top:724px;width:1px;height:1px;background:#a6a6a6;box-shadow:0 0 0 1px #fff"></div>
<div style="left:877px;top:126px;width:33px;height:31px;border:5px solid #ed1c24"></div>
<div style="left:523px;top:355px;width:123px;height:25px;border:5px solid #ed1c24"></div>
<div style="left:2px;top:791px;width:1196px;height:20px;background:linear-gradient(90deg,#0000ff 0%,#00ffff 10%,#00ff00 20.3%,#ffff00 30.4%,#ffa500 66%,#ff0a00 100%)"></div>
<div style="left:2px;top:819px;line-height:14px">Ready</div>
</div>
</body></html>
